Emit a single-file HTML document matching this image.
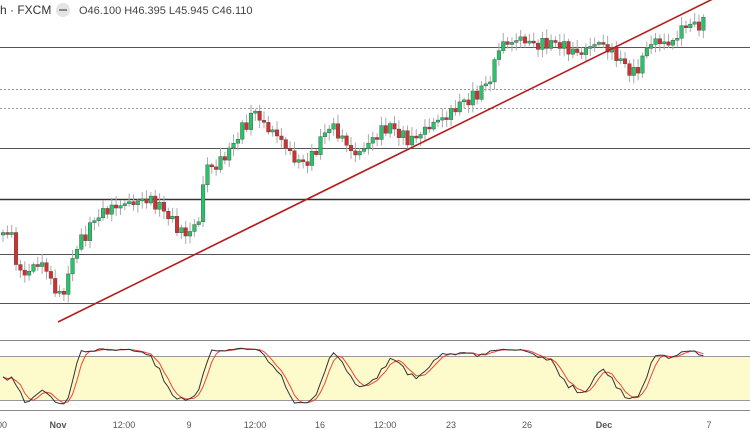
<!DOCTYPE html>
<html><head><meta charset="utf-8"><style>
html,body{margin:0;padding:0;background:#fff;width:750px;height:430px;overflow:hidden}
svg{display:block}
text{font-family:"Liberation Sans",sans-serif}
</style></head><body>
<svg id="s" width="750" height="430" xmlns="http://www.w3.org/2000/svg">
<rect x="0" y="356" width="750" height="44" fill="#fdfbcc"/>
<g stroke="#555" stroke-width="1">
<line x1="0" y1="47.5" x2="750" y2="47.5"/>
<line x1="0" y1="148.5" x2="750" y2="148.5"/>
<line x1="0" y1="199.5" x2="750" y2="199.5" stroke="#333" stroke-width="1.6"/>
<line x1="0" y1="254.5" x2="750" y2="254.5"/>
<line x1="0" y1="303.5" x2="750" y2="303.5"/>
<line x1="0" y1="340.5" x2="750" y2="340.5" stroke="#888"/>
<line x1="0" y1="356.5" x2="750" y2="356.5" stroke="#999"/>
<line x1="0" y1="400.5" x2="750" y2="400.5" stroke="#999"/>
<line x1="0" y1="410.5" x2="750" y2="410.5" stroke="#888"/>
</g>
<g stroke="#999" stroke-dasharray="2,2"><line x1="0" y1="89.5" x2="750" y2="89.5"/><line x1="0" y1="108.5" x2="750" y2="108.5"/></g>
<g id="c"></g>
<line x1="58" y1="322" x2="725" y2="-7" stroke="#b71c1c" stroke-width="1.6"/>
<g id="o"></g>
<text x="0" y="14" font-size="12" fill="#333">h · FXCM</text>
<circle cx="63" cy="10" r="7" fill="#e4e4e4"/><rect x="59" y="9" width="8" height="2" fill="#888"/>
<text x="79" y="14" font-size="11" fill="#444">O46.100 H46.395 L45.945 C46.110</text>
<g font-size="9" fill="#555" text-anchor="middle">
<text x="2" y="428">00</text><text x="58" y="428" font-weight="bold">Nov</text><text x="124" y="428">12:00</text><text x="189" y="428">9</text><text x="255" y="428">12:00</text><text x="320" y="428">16</text><text x="385" y="428">12:00</text><text x="451" y="428">23</text><text x="527" y="428">26</text><text x="604" y="428" font-weight="bold">Dec</text><text x="709" y="428">7</text>
</g>
</svg>
<script>
var K=[[0,235],[10,232],[20,272],[40,262],[50,280],[57,300],[65,290],[75,245],[95,220],[110,212],[130,200],[145,198],[160,210],[175,225],[185,232],[200,218],[205,165],[215,172],[230,150],[240,128],[255,110],[265,130],[280,140],[295,157],[310,160],[330,128],[345,140],[355,152],[370,143],[390,128],[410,137],[430,128],[445,120],[460,100],[475,95],[490,85],[500,45],[510,42],[520,35],[530,42],[540,48],[560,44],[580,50],[600,46],[620,58],[635,72],[650,45],[670,45],[685,20],[700,26]];
function f(x){for(var i=1;i<K.length;i++){if(x<=K[i][0]){var a=K[i-1],b=K[i];return a[1]+(b[1]-a[1])*(x-a[0])/(b[0]-a[0]);}}return 26;}
var h='',prev=f(0),closes=[];
for(var x=3;x<=705;x+=4.35){var c=f(x)+Math.sin(x*1.7)*7*Math.cos(x*.37)+Math.sin(x*0.9)*3;var o=prev;var t=Math.min(o,c)-2-Math.abs(Math.sin(x*3.1))*7,b=Math.max(o,c)+2+Math.abs(Math.cos(x*2.3))*6;
var up=c<o;var col=up?'#26c467':'#d32f2f';if(Math.abs(c-o)<2){c=o+2*(up?-1:1)}
h+='<line x1="'+x+'" x2="'+x+'" y1="'+t+'" y2="'+b+'" stroke="#aaa"/>';
h+='<rect x="'+(x-1.8)+'" y="'+Math.min(o,c)+'" width="3.6" height="'+Math.abs(c-o)+'" fill="'+col+'" stroke="#444" stroke-width=".4"/>';
prev=c;closes.push([x,c]);}
document.getElementById('c').innerHTML=h;
var k=[];
for(var i=0;i<closes.length;i++){var lo=1e9,hi=-1e9;for(var j=Math.max(0,i-13);j<=i;j++){lo=Math.min(lo,closes[j][1]-4);hi=Math.max(hi,closes[j][1]+4);}k.push((hi-closes[i][1])/(hi-lo));}
var ks=[];for(i=0;i<k.length;i++){var a=k[i],n=1;if(i>0){a+=k[i-1];n++}if(i>1){a+=k[i-2];n++}ks.push(a/n)}
var p1='',p2='';for(i=0;i<ks.length;i++){var a2=ks[i],n2=1;if(i>0){a2+=ks[i-1];n2++}if(i>1){a2+=ks[i-2];n2++}var y1=408-ks[i]*62,y2=408-(a2/n2)*62;p1+=(i?'L':'M')+closes[i][0]+' '+y1;p2+=(i?'L':'M')+closes[i][0]+' '+y2;}
document.getElementById('o').innerHTML='<path d="'+p2+'" fill="none" stroke="#f44336" stroke-width="1"/><path d="'+p1+'" fill="none" stroke="#333" stroke-width="1"/>';
</script>
</body></html>
